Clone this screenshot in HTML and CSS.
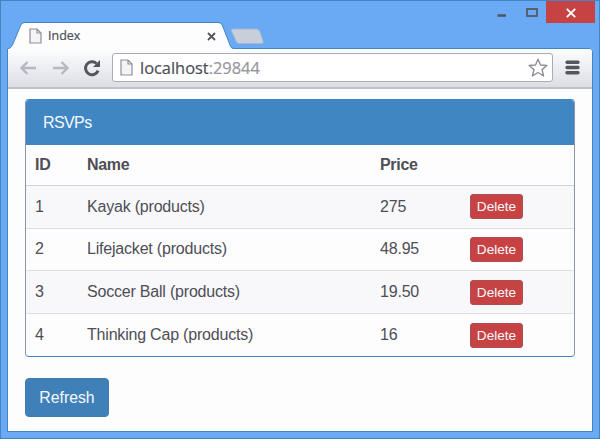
FILE: index.html
```html
<!DOCTYPE html>
<html lang="en">
<head>
<meta charset="utf-8">
<title>Index</title>
<link rel="stylesheet" href="styles.css">
</head>
<body>
<div class="window">
  <header class="titlebar">
    <svg class="tab-shape" width="600" height="49" viewBox="0 0 600 49">
      <path d="M7.5 49 C12 48 13 44 15 39 L20 27 C21 24 22 23 25 23 H218 C221 23 222 24 223 27 L230 45 C231 48 232 49 235 49 Z" fill="#fdfdfe"/>
      <path d="M7.5 49 C12 48 13 44 15 39 L20 27 C21 24 22 22.5 25 22.5 H218 C221 22.5 222 24 223 27 L230 45 C231 48 232 48.5 235 48.5 H590" fill="none" stroke="#3f86c2"/>
      <path d="M234 29 H256 C258 29 259 30 260 32 L263 41 C263.500 43 263 43.500 261 43.500 H240 C238 43.500 237 43 236 41 L231.500 31 C231 29.500 232 29 234 29 Z" fill="#c9cedb" stroke="#a4b8d4"/>
    </svg>
    <div class="tab">
      <svg class="page-icon" width="13" height="16" viewBox="0 0 13 16"><path d="M1 1H8L12 5V15H1Z M8 1V5H12" fill="#f4f4f7" stroke="#8e8e98" stroke-width="1.200"/></svg>
      <span class="tab-title">Index</span>
      <svg width="9" height="9" viewBox="0 0 9 9"><path d="M1 1L8 8M8 1L1 8" stroke="#55555d" stroke-width="1.800"/></svg>
    </div>
    <div class="controls">
      <svg class="minimize" width="10" height="4" viewBox="0 0 10 4"><path d="M.5 1.500H9" stroke="#55555d" stroke-width="2.500"/></svg>
      <svg class="maximize" width="12" height="9" viewBox="0 0 12 9"><rect x="1" y="1" width="10" height="7" fill="none" stroke="#55555d" stroke-width="1.700"/></svg>
      <span class="close"><svg width="10" height="10" viewBox="0 0 10 10"><path d="M.8 .8L9.200 9.200M9.200 .8L.8 9.200" stroke="#fff" stroke-width="1.900"/></svg></span>
    </div>
  </header>
  <div class="frame">
    <div class="toolbar">
      <svg width="17" height="14" viewBox="0 0 17 14"><path d="M16 7H2M7.500 1L1.500 7L7.500 13" fill="none" stroke="#b5b8c2" stroke-width="2.300"/></svg>
      <svg class="forward" width="17" height="14" viewBox="0 0 17 14"><path d="M1 7H15M9.500 1L15.500 7L9.500 13" fill="none" stroke="#b5b8c2" stroke-width="2.300"/></svg>
      <svg class="reload" width="18" height="18" viewBox="0 0 18 18"><path d="M13.500 4.500A6.500 6.500 0 1 0 15.100 11.600" fill="none" stroke="#55555d" stroke-width="2.900"/><path d="M17 1V8H10Z" fill="#55555d"/></svg>
      <div class="address">
        <svg width="13" height="17" viewBox="0 0 13 17"><path d="M1 1H8L12 5V16H1Z M8 1V5H12" fill="#f4f4f7" stroke="#8e8e98" stroke-width="1.200"/></svg>
        <span class="url">localhost<span class="port">:29844</span></span>
        <svg class="star" width="20" height="20" viewBox="0 0 20 20"><path d="M10 1.200L12.500 7L18.900 7.500L14 11.600L15.600 18L10 14.500L4.400 18L6 11.600L1.100 7.500L7.500 7Z" fill="#fff" stroke="#8e8e98" stroke-width="1.400" stroke-linejoin="round"/></svg>
      </div>
      <svg class="menu" width="15" height="15" viewBox="0 0 15 15"><path d="M2 2.200H13M2 7.500H13M2 12.800H13" stroke="#55555d" stroke-width="3.400" stroke-linecap="round"/></svg>
    </div>
    <main class="page">
      <section class="panel">
        <div class="panel-heading">RSVPs</div>
        <table>
          <thead><tr><th class="id">ID</th><th class="name">Name</th><th class="price">Price</th><th></th></tr></thead>
          <tbody>
            <tr><td>1</td><td>Kayak (products)</td><td>275</td><td><button class="delete">Delete</button></td></tr>
            <tr><td>2</td><td>Lifejacket (products)</td><td>48.95</td><td><button class="delete">Delete</button></td></tr>
            <tr><td>3</td><td>Soccer Ball (products)</td><td>19.50</td><td><button class="delete">Delete</button></td></tr>
            <tr><td>4</td><td>Thinking Cap (products)</td><td>16</td><td><button class="delete">Delete</button></td></tr>
          </tbody>
        </table>
      </section>
      <button class="refresh">Refresh</button>
    </main>
  </div>
</div>
</body>
</html>
```
FILE: styles.css
```css
* { box-sizing: border-box; }
body { margin: 0; font-family: "Liberation Sans", Arial, sans-serif; color: #4e4e56; }
svg { display: block; flex: none; }
.window {
  width: 600px;
  height: 439px;
  display: flex;
  flex-direction: column;
  padding-bottom: 7px;
  background: #6aa9f4;
  box-shadow: inset 0 0 0 1px #3f86c2;
}
.titlebar { position: relative; height: 49px; flex: none; display: flex; justify-content: space-between; }
.tab-shape { position: absolute; inset: 0; }
.tab { position: relative; display: flex; align-items: center; width: 216px; height: 26px; margin-top: 23px; padding-left: 29px; }
.tab-title { flex: 1; margin-left: 6px; font: 12.5px "Open Sans", "Noto Sans", sans-serif; line-height: 24px; -webkit-text-stroke: 0.2px; }
.controls { position: relative; display: flex; padding: 1px 5px 0 0; }
.minimize { margin: 13px 19px 0 0; }
.maximize { margin: 7px 8px 0 0; }
.close { display: flex; align-items: center; justify-content: center; width: 49px; height: 22px; padding: 2px 0 0 1px; background: #c74343; }
.frame { flex: 1; min-height: 0; margin: 0 7px; border: 1px solid #3f86c2; border-top: 0; border-radius: 0 4px 0 0; background: #fdfdfe; overflow: hidden; display: flex; flex-direction: column; }
.toolbar { height: 40px; flex: none; display: flex; align-items: center; padding: 0 11px 1px 12px; border-bottom: 2px solid #bfc2cb; background: linear-gradient(#fdfdfe, #dcdee5); }
.forward { margin-left: 15px; }
.reload { margin-left: 14px; }
.address { display: flex; align-items: center; width: 441px; height: 29px; margin-left: 11px; padding: 0 4px 0 7px; background: #fff; border: 1px solid #a9abb7; border-radius: 3px; }
.url { flex: 1; margin-left: 7px; font: 16.4px "Open Sans", "Noto Sans", sans-serif; line-height: 26px; -webkit-text-stroke: 0.2px; }
.port { color: #96969e; }
.menu { margin-left: 12px; }
.page { padding: 10px 17px; }
.panel { height: 258px; border: 1px solid #3f86c2; border-left-color: #8e94ad; border-right-color: #8e94ad; border-radius: 4px; overflow: hidden; }
.panel-heading { height: 45px; padding-left: 17px; font-size: 16px; letter-spacing: -0.6px; line-height: 45px; color: #f7f9fd; background: #3f86c2; }
table { width: 100%; table-layout: fixed; border-collapse: separate; border-spacing: 0; font-size: 16px; letter-spacing: -0.2px; }
th, td { padding: 0 9px; text-align: left; vertical-align: middle; }
th { height: 41px; border-bottom: 1px solid #d0d3db; letter-spacing: -0.3px; }
td { height: 42.67px; border-bottom: 1px solid #dcdee4; }
tr:last-child td { border-bottom: 0; }
tbody tr:nth-child(odd) { background: #f8f8fa; }
.id { width: 52px; }
.name { width: 293px; }
.price { width: 90px; }
button { display: block; font-family: inherit; color: #f7f9fd; padding: 0; }
.delete { width: 53px; height: 25px; font-size: 13.6px; background: #c74343; border: 1px solid #aa5055; border-radius: 3px; }
.refresh { width: 84px; height: 39px; margin-top: 21px; font-size: 15.8px; background: #3f80b9; border: 1px solid #427db0; border-radius: 4px; }
```
